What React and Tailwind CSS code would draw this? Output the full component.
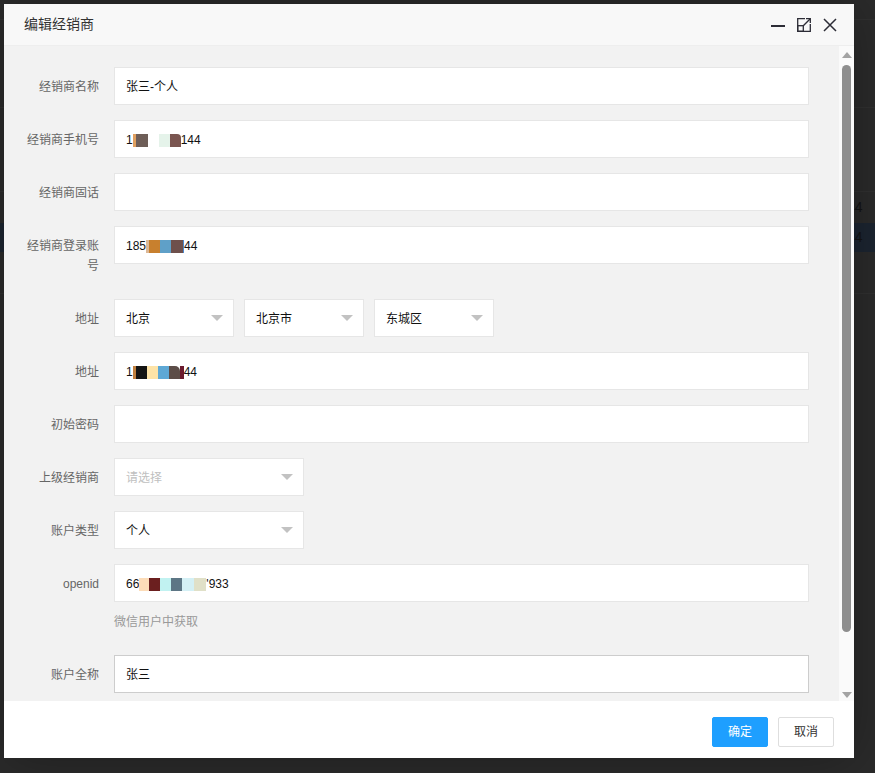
import React from "react";

const FONT = "font-['Liberation_Sans','Noto_Sans_CJK_SC',sans-serif]";

// redaction blocks inside masked values
function Mask({ blocks }) {
  return (
    <span className="inline-flex items-center h-[13px]">
      {blocks.map(([w, c, extra], i) => (
        <span
          key={i}
          className={`inline-block h-[13px] ${extra || ""}`}
          style={{ width: w, background: c }}
        />
      ))}
    </span>
  );
}

function Row({ label, children, last }) {
  return (
    <div className={`flex items-start ${last ? "" : "mb-[15px]"}`}>
      <label className="w-[110px] shrink-0 px-[15px] pt-[10px] pb-[8px] leading-[20px] text-right text-[12px] text-[#666]">
        {label}
      </label>
      <div className="flex-1 min-w-0">{children}</div>
    </div>
  );
}

function Input({ children, border = "border-[#e6e6e6]" }) {
  return (
    <div
      className={`h-[38px] border ${border} bg-white pl-[11px] pt-[2px] flex items-center text-[12px] text-[#111] whitespace-nowrap`}
    >
      {children}
    </div>
  );
}

function Select({ value, placeholder, width }) {
  return (
    <div
      className={`${width} h-[38px] border border-[#e6e6e6] bg-white pl-[11px] pr-[10px] flex items-center justify-between text-[12px]`}
    >
      {value ? (
        <span className="text-[#111] pt-[2px]">{value}</span>
      ) : (
        <span className="text-[#c0c0c0] pt-[2px]">{placeholder}</span>
      )}
      <span className="w-0 h-0 border-x-[6px] border-x-transparent border-t-[6px] border-t-[#c2c2c2]" />
    </div>
  );
}

function HeaderIcons() {
  return (
    <div className="flex items-center gap-[12px] pr-[17px] text-[#2c2c36]">
      <svg width="14" height="14" viewBox="0 0 14 14" fill="none" stroke="currentColor">
        <path d="M0 8h14" strokeWidth="2" />
      </svg>
      <svg width="14" height="14" viewBox="0 0 14 14" fill="none" stroke="currentColor" strokeWidth="1.3">
        <path d="M8 0.7H0.7V13.3H13.3V6" />
        <rect x="0.7" y="7.7" width="5.6" height="5.6" />
        <path d="M6.3 7.7L13 1" />
        <path d="M9 0.7H13.3V5" />
      </svg>
      <svg width="14" height="14" viewBox="0 0 14 14" fill="none" stroke="currentColor" strokeWidth="1.5">
        <path d="M1 1L13 13M13 1L1 13" />
      </svg>
    </div>
  );
}

function Scrollbar() {
  return (
    <div className="w-[15px] shrink-0 bg-[#fafafa] flex flex-col items-center pt-[6px] pb-[3px]">
      <span className="w-0 h-0 border-x-[5px] border-x-transparent border-b-[6px] border-b-[#a3a3a3]" />
      <div className="mt-[7px] w-[9px] h-[567px] rounded-full bg-[#8e8e8e]" />
      <span className="mt-auto w-0 h-0 border-x-[5px] border-x-transparent border-t-[6px] border-t-[#a3a3a3]" />
    </div>
  );
}

function Backdrop() {
  return (
    <div className="text-[14px] text-[#141414]">
      <div className="h-[20px] border-b border-[#313131]" />
      <div className="h-[88px] border-b border-[#313131]" />
      <div className="h-[84px] border-b border-[#313131]" />
      <div className="h-[31px] flex items-center">
        <span className="ml-[847px]">44</span>
      </div>
      <div className="h-[29px] bg-[#1c2531] flex items-center">
        <span className="ml-[847px]">44</span>
      </div>
      <div className="h-[42px] border-b border-[#313131]" />
    </div>
  );
}

export default function App() {
  return (
    <div className={`relative w-[875px] h-[773px] overflow-hidden bg-[#2b2b2b] ${FONT}`}>
      <Backdrop />

      {/* dialog */}
      <div className="absolute left-[4px] top-[4px] w-[850px] h-[754px] bg-white flex flex-col shadow-[1px_1px_50px_rgba(0,0,0,0.3)]">
        <div className="h-[42px] shrink-0 bg-[#f8f8f8] border-b border-[#eee] flex items-center justify-between pl-[20px]">
          <span className="text-[14px] text-[#333]">编辑经销商</span>
          <HeaderIcons />
        </div>

        <div className="h-[655px] shrink-0 flex bg-[#f2f2f2]">
          <div className="flex-1 overflow-hidden pt-[21px] pr-[30px]">
            <Row label="经销商名称">
              <Input>张三-个人</Input>
            </Row>
            <Row label="经销商手机号">
              <Input>
                1
                <Mask
                  blocks={[
                    [3, "#e0a060"],
                    [12, "#6e5e58"],
                    [11, "#ffffff"],
                    [11, "#e5f3ea"],
                    [11, "#7a5550", "rounded-tr-[4px]"],
                  ]}
                />
                144
              </Input>
            </Row>
            <Row label="经销商固话">
              <Input />
            </Row>
            <Row label="经销商登录账号">
              <Input>
                185
                <Mask
                  blocks={[
                    [3, "#dcb896"],
                    [11, "#c8802e"],
                    [11, "#5fa0c8"],
                    [12, "#6e504c"],
                    [1, "#4a8ad0"],
                  ]}
                />
                44
              </Input>
            </Row>
            <Row label="地址">
              <div className="flex gap-[10px]">
                <Select value="北京" width="w-[120px]" />
                <Select value="北京市" width="w-[120px]" />
                <Select value="东城区" width="w-[120px]" />
              </div>
            </Row>
            <Row label="地址">
              <Input>
                1
                <Mask
                  blocks={[
                    [3, "#c08040"],
                    [11, "#141414"],
                    [11, "#fde3a7"],
                    [11, "#5ea8d5"],
                    [11, "#5c4d48", "rounded-tr-[5px]"],
                    [4, "#6b1a2e"],
                  ]}
                />
                44
              </Input>
            </Row>
            <Row label="初始密码">
              <Input />
            </Row>
            <Row label="上级经销商">
              <Select placeholder="请选择" width="w-[190px]" />
            </Row>
            <Row label="账户类型">
              <Select value="个人" width="w-[190px]" />
            </Row>
            <Row label="openid">
              <Input>
                66
                <Mask
                  blocks={[
                    [10, "#fcdcb8"],
                    [11, "#6b1f1f"],
                    [11, "#c1f2f1"],
                    [11, "#5d7685"],
                    [12, "#d4f0f5"],
                    [12, "#e0e0c8"],
                  ]}
                />
                '933
              </Input>
              <div className="pt-[10px] pb-[8px] leading-[20px] text-[12px] text-[#999]">
                微信用户中获取
              </div>
            </Row>
            <Row label="账户全称" last>
              <Input border="border-[#cdcdcd]">张三</Input>
            </Row>
          </div>
          <Scrollbar />
        </div>

        <div className="flex-1 bg-white flex justify-end items-start pt-[16px] pr-[20px] gap-[10px]">
          <button className="w-[56px] h-[30px] bg-[#1e9fff] border border-[#1e9fff] text-white text-[12px] rounded-[2px]">
            确定
          </button>
          <button className="w-[56px] h-[30px] bg-white border border-[#dedede] text-[#333] text-[12px] rounded-[2px]">
            取消
          </button>
        </div>
      </div>
    </div>
  );
}
